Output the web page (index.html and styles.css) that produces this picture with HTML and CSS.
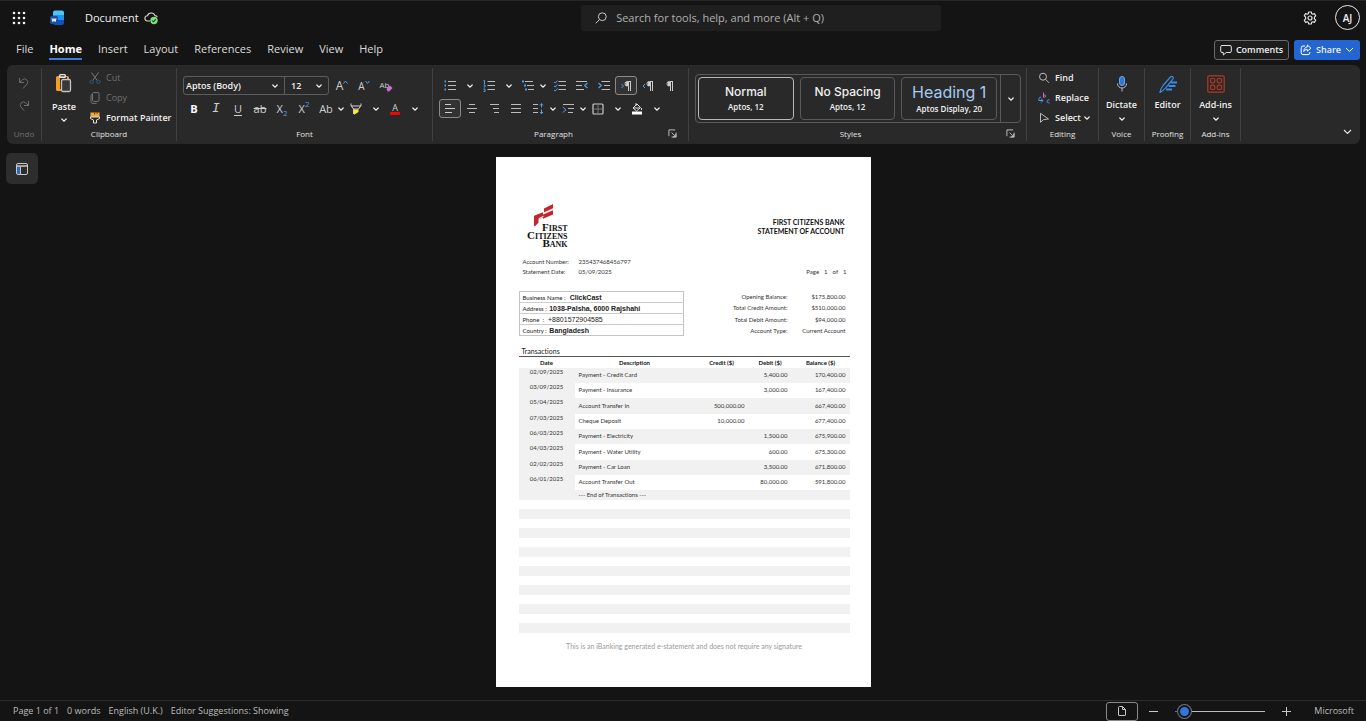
FILE: index.html
```html
<!DOCTYPE html>
<html lang="en">
<head>
<meta charset="utf-8">
<title>Document</title>
<link rel="stylesheet" href="styles.css">
</head>
<body>
<svg class="defs" aria-hidden="true">
  <symbol id="chev" viewBox="0 0 8 8"><path d="M1.800 3 4 5.200 6.200 3" fill="none" stroke="currentColor" stroke-width="1.200" stroke-linecap="round"/></symbol>
  <symbol id="launch" viewBox="0 0 10 10"><path d="M1 8V1h7M4 4l3.600 3.600M9 4v5H4M8.600 5.500v3h-3" fill="none" stroke="currentColor"/></symbol>
</svg>

<header class="titlebar">
  <div class="brand">
    <button class="plain waffle" aria-label="App launcher"><svg width="14" height="14" viewBox="0 0 14 14" fill="#f2f2f2"><circle cx="2" cy="2" r="1.300"/><circle cx="7" cy="2" r="1.300"/><circle cx="12" cy="2" r="1.300"/><circle cx="2" cy="7" r="1.300"/><circle cx="7" cy="7" r="1.300"/><circle cx="12" cy="7" r="1.300"/><circle cx="2" cy="12" r="1.300"/><circle cx="7" cy="12" r="1.300"/><circle cx="12" cy="12" r="1.300"/></svg></button>
    <svg class="word" width="15" height="16" viewBox="0 0 15 16"><path d="M3 5V2.500A2 2 0 0 1 5 .5h7a2 2 0 0 1 2 2V5z" fill="#4fc3fa"/><path d="M3 5h11v5H3z" fill="#2390ee"/><path d="M3 10h11v3a2 2 0 0 1-2 2H5a2 2 0 0 1-2-2z" fill="#154fb8"/><rect y="6" width="8" height="8" rx="1.500" fill="#174ea6"/><path d="m2 8.300.9 3.300L4 8.600l1.100 3L6 8.300" fill="none" stroke="#fff"/></svg>
    <span class="doc-title">Document</span>
    <svg class="cloud" width="15" height="14" viewBox="0 0 15 14"><path d="M6 10H3.600a2.600 2.600 0 0 1-.2-5.200A4 4 0 0 1 11 4.600c1.300.1 2 .8 2.200 1.600" fill="none" stroke="#d8d8d8" stroke-width="1.100"/><circle cx="10" cy="9.500" r="3.700" fill="#7ddc7d"/><path d="m8.300 9.600 1.200 1.200 2.200-2.400" fill="none" stroke="#153d19" stroke-width="1.100"/></svg>
  </div>
  <label class="search">
    <svg width="12" height="12" viewBox="0 0 12 12" fill="none" stroke="#c8c8c8"><circle cx="7.300" cy="4.700" r="3.900"/><path d="M4.500 7.500.7 11.300"/></svg>
    <input type="search" aria-label="Search" placeholder="Search for tools, help, and more (Alt + Q)">
  </label>
  <div class="account">
    <button class="plain" aria-label="Settings"><svg width="14" height="14" viewBox="0 0 14 14" fill="none" stroke="#e4e4e4" stroke-width="1.200" stroke-linejoin="round"><path d="M5.700 1h2.600l.4 1.700 1 .5 1.700-.6 1.300 2.200-1.300 1.300v1.800l1.300 1.300-1.300 2.200-1.700-.6-1 .5-.4 1.700H5.700l-.4-1.700-1-.5-1.700.6L1.300 9.200l1.300-1.300V6.100L1.300 4.800l1.300-2.200 1.700.6 1-.5z"/><circle cx="7" cy="7" r="2"/></svg></button>
    <button class="plain avatar">AJ</button>
  </div>
</header>

<div class="tabbar">
  <nav class="tabs">
    <a href="#">File</a><a href="#" class="active">Home</a><a href="#">Insert</a><a href="#">Layout</a><a href="#">References</a><a href="#">Review</a><a href="#">View</a><a href="#">Help</a>
  </nav>
  <div class="actions">
    <button class="comments"><svg width="12" height="12" viewBox="0 0 12 12" fill="none" stroke="#e4e4e4"><path d="M2 1.500h8A1.300 1.300 0 0 1 11.300 2.800v4.400A1.300 1.300 0 0 1 10 8.500H6.300L3.300 11V8.500H2A1.300 1.300 0 0 1 .7 7.200V2.800A1.300 1.300 0 0 1 2 1.500z"/></svg>Comments</button>
    <button class="share"><svg width="12" height="12" viewBox="0 0 12 12" fill="none" stroke="#fff"><path d="M5 2H3a1.800 1.800 0 0 0-1.800 1.800v5A1.800 1.800 0 0 0 3 10.600h5a1.800 1.800 0 0 0 1.800-1.800V8M7.300 1l3.700 3.200-3.700 3V5.400C5.600 5.400 4.500 6 3.800 7.500 4 4.800 5.200 3.200 7.300 3z"/></svg>Share<svg width="9" height="9" viewBox="0 0 9 9"><path d="M1 3l3.500 3.500L8 3" fill="none" stroke="#fff"/></svg></button>
  </div>
</div>

<section class="ribbon" aria-label="Home ribbon">
  <div class="group undo">
    <div class="stack">
      <button class="plain" disabled aria-label="Undo"><svg width="12" height="12" viewBox="0 0 12 12" fill="none" stroke="#6c6c6c"><path d="M1.500 1v4.500H6M1.700 5.300 4.600 2.600a3.200 3.200 0 0 1 4.800 4L5 11.500"/></svg></button>
      <button class="plain" disabled aria-label="Redo"><svg width="12" height="12" viewBox="0 0 12 12" fill="none" stroke="#6c6c6c"><path d="M10.500 1v4.500H6M10.300 5.300 7.400 2.600a3.200 3.200 0 0 0-4.800 4L6 10.500"/></svg></button>
    </div>
    <div class="caption dim">Undo</div>
  </div>

  <div class="group clipboard">
    <div class="clip-body">
      <button class="plain big"><svg width="18" height="20" viewBox="0 0 18 20"><rect x="1" y="3" width="13" height="15" rx="1.500" fill="#f39c26"/><rect x="5" y="4" width="7" height="12" fill="#292929"/><rect x="4" y="1" width="7" height="4" rx="1.500" fill="#e6e6e6"/><rect x="5.500" y="2" width="4" height="1.500" fill="#555"/><rect x="6.500" y="6.500" width="9" height="12" rx="1.500" fill="#393939" stroke="#c4c4c4" stroke-width="1.300"/></svg><span>Paste</span><svg class="chev"><use href="#chev"/></svg></button>
      <div class="list">
        <button class="plain line" disabled><svg width="12" height="12" viewBox="0 0 12 12" fill="none"><path d="m2.500.5 5.700 8M9.500.5l-5.700 8" stroke="#777"/><circle cx="2.600" cy="9.800" r="1.700" stroke="#31587e"/><circle cx="9.400" cy="9.800" r="1.700" stroke="#31587e"/></svg>Cut</button>
        <button class="plain line" disabled><svg width="12" height="12" viewBox="0 0 12 12" fill="none" stroke="#747474"><rect x="3.500" y=".6" width="6.500" height="8.800" rx="1"/><path d="M3.300 2.300c-.9 0-1.300.4-1.300 1.300v6c0 1.200.6 1.800 1.700 1.800h4"/></svg>Copy</button>
        <button class="plain line"><svg width="12" height="12" viewBox="0 0 12 12"><path d="M1.500.5h9V5h-9z" fill="#f6a936"/><path d="M5 .5h1.200v2H5zM7.500.5h1.200v1.500H7.500z" fill="#7b4d10"/><path d="M1.500 5h9v1.600L7.500 8v3h-3V8l-3-1.400z" fill="none" stroke="#ddd"/></svg>Format Painter</button>
      </div>
    </div>
    <div class="caption">Clipboard</div>
  </div>

  <div class="group font">
    <div class="row">
      <div class="combo">
        <label class="pick name"><select aria-label="Font"><option>Aptos (Body)</option></select><svg class="chev"><use href="#chev"/></svg></label>
        <label class="pick size"><select aria-label="Font size"><option>12</option></select><svg class="chev"><use href="#chev"/></svg></label>
      </div>
      <button class="tool" aria-label="Grow font"><span class="grow">A</span><svg width="5" height="12" viewBox="0 0 5 12"><path d="M.5 3.500 2.500 1l2 2.500" fill="none" stroke="#4f9fe6"/></svg></button>
      <button class="tool" aria-label="Shrink font"><span class="shrink">A</span><svg width="5" height="12" viewBox="0 0 5 12"><path d="M.5 1 2.500 3.500l2-2.500" fill="none" stroke="#4f9fe6"/></svg></button>
      <button class="tool clear" aria-label="Clear formatting"><span>Ab</span><svg width="7" height="7" viewBox="0 0 8 8"><path d="M.5 4.500 4.500.5l3 3-4 4H2z" fill="#d070d8"/></svg></button>
    </div>
    <div class="row">
      <button class="tool bold">B</button><button class="tool italic">I</button><button class="tool under">U</button><button class="tool strike">ab</button>
      <button class="tool">X<sub>2</sub></button><button class="tool">X<sup>2</sup></button>
      <button class="tool">Ab</button><button class="drop tight" aria-label="Case options"><svg class="chev"><use href="#chev"/></svg></button>
      <button class="tool" aria-label="Highlight"><svg width="12" height="12" viewBox="0 0 12 12"><path d="M1 .5v2l2.500 3.500h5L11 2.500v-2M1 3h10M3.500 6v5" fill="none" stroke="#d4d4d4"/><path d="M4 6.500h4.500V9L4 11.800z" fill="#ffee21"/></svg></button><button class="drop" aria-label="Highlight colours"><svg class="chev"><use href="#chev"/></svg></button>
      <button class="tool colour">A</button><button class="drop" aria-label="Font colours"><svg class="chev"><use href="#chev"/></svg></button>
    </div>
    <div class="caption">Font</div>
  </div>

  <div class="group para">
    <div class="row">
      <button class="tool" aria-label="Bullets"><svg width="12" height="12" viewBox="0 0 12 12"><path d="M4 1.500h8M4 5.500h8M4 9.500h8" stroke="#bbb"/><path d="M.5 1.500h1.500M.5 5.500h1.500M.5 9.500h1.500" stroke="#4f9fe6" stroke-width="2"/></svg></button><button class="drop" aria-label="Bullet options"><svg class="chev"><use href="#chev"/></svg></button>
      <button class="tool" aria-label="Numbering"><svg width="12" height="12" viewBox="0 0 12 12"><path d="M4.500 1.500H12M4.500 5.500H12M4.500 9.500H12" stroke="#bbb"/><path d="M.5.500h1V4M.5 5h1.500v2H.8M.5 9h1.500v2.500H.5" fill="none" stroke="#4f9fe6"/></svg></button><button class="drop" aria-label="Number options"><svg class="chev"><use href="#chev"/></svg></button>
      <button class="tool" aria-label="Multilevel list"><svg width="12" height="12" viewBox="0 0 12 12"><path d="M3 1.500h8M5 5.500h7M6 9.500h6" stroke="#bbb"/><path d="M0 1.500h2M2 5.500h2M3 9.500h2" stroke="#4f9fe6" stroke-width="2"/></svg></button><button class="drop tight after" aria-label="Multilevel options"><svg class="chev"><use href="#chev"/></svg></button>
      <button class="tool" aria-label="Checklist"><svg width="12" height="12" viewBox="0 0 12 12" fill="none"><path d="M4.500 1.500H12M4.500 5.500H12M4.500 9.500H12" stroke="#bbb"/><path d="m0 2 1.300 1L3.500.5M0 6l1.300 1 2.200-2.500M0 10l1.300 1 2.200-2.500" stroke="#4f9fe6"/></svg></button>
      <button class="tool" aria-label="Decrease indent"><svg width="12" height="12" viewBox="0 0 12 12" fill="none"><path d="M0 1.500h11M0 5.500h6M0 9.500h8" stroke="#bbb"/><path d="M11.500 3 8.700 5.500l2.800 2.500" stroke="#4f9fe6" stroke-width="1.200"/></svg></button>
      <button class="tool" aria-label="Increase indent"><svg width="12" height="12" viewBox="0 0 12 12" fill="none"><path d="M3.500 1.500H12M6 5.500h6M3.500 9.500H12" stroke="#bbb"/><path d="M.5 3 3.300 5.500.5 8" stroke="#4f9fe6" stroke-width="1.200"/></svg></button>
      <button class="tool on" aria-label="Left to right"><svg width="12" height="12" viewBox="0 0 12 12"><path d="M11 1.500H7.300a2.300 2.300 0 0 0 0 4.600M8.500 1.500V11M10.500 1.500V11" fill="none" stroke="#ccc"/><path d="M6 2h2.500v4H6z" fill="#ccc"/><path d="M1.500 4 3.500 6l-2 2" fill="none" stroke="#4f9fe6"/></svg></button>
      <button class="tool" aria-label="Right to left"><svg width="12" height="12" viewBox="0 0 12 12"><path d="M11 1.500H7.300a2.300 2.300 0 0 0 0 4.600M8.500 1.500V11M10.500 1.500V11" fill="none" stroke="#ccc"/><path d="M6 2h2.500v4H6z" fill="#ccc"/><path d="M3 4 1 6l2 2" fill="none" stroke="#4f9fe6"/></svg></button>
      <button class="tool" aria-label="Show marks"><svg width="12" height="12" viewBox="0 0 12 12"><path d="M9 1.500H5.300a2.300 2.300 0 0 0 0 4.600M6.500 1.500V11M8.500 1.500V11" fill="none" stroke="#ccc"/><path d="M4 2h2.500v4H4z" fill="#ccc"/></svg></button>
    </div>
    <div class="row">
      <button class="tool on" aria-label="Align left"><svg width="12" height="12" viewBox="0 0 12 12" stroke="#ccc"><path d="M1 1.500h6M1 5.500h10M1 9.500h7"/></svg></button>
      <button class="tool" aria-label="Centre"><svg width="12" height="12" viewBox="0 0 12 12" stroke="#bbb"><path d="M3 1.500h6M1 5.500h10M3 9.500h6"/></svg></button>
      <button class="tool" aria-label="Align right"><svg width="12" height="12" viewBox="0 0 12 12" stroke="#bbb"><path d="M2 1.500h9M5 5.500h6M6 9.500h5"/></svg></button>
      <button class="tool" aria-label="Justify"><svg width="12" height="12" viewBox="0 0 12 12" stroke="#bbb"><path d="M1 1.500h10M1 5.500h10M1 9.500h10"/></svg></button>
      <button class="tool" aria-label="Line spacing"><svg width="12" height="12" viewBox="0 0 12 12" fill="none"><path d="M1 1.500h5M1 5.500h5M1 9.500h5" stroke="#bbb"/><path d="M9.500 .5V4.500M9.500 6.500V11M8 2.500l1.500-1.800L11 2.500M8 9l1.500 1.800L11 9" stroke="#4f9fe6"/></svg></button><button class="drop tight" aria-label="Spacing options"><svg class="chev"><use href="#chev"/></svg></button>
      <button class="tool" aria-label="Indents"><svg width="12" height="12" viewBox="0 0 12 12" fill="none"><path d="M1 1.500h11M6 5.500h6M6 9.500h5" stroke="#bbb"/><path d="M.8 4 4 6.800.8 9.500" stroke="#4f9fe6"/></svg></button><button class="drop tight" aria-label="Indent options"><svg class="chev"><use href="#chev"/></svg></button>
      <button class="tool" aria-label="Borders"><svg width="12" height="12" viewBox="0 0 12 12" fill="none"><rect x="1" y="1" width="10" height="10" rx="1" stroke="#ccc" stroke-width="1.200"/><path d="M6 1v10M1 6h10" stroke="#777"/></svg></button><button class="drop" aria-label="Border options"><svg class="chev"><use href="#chev"/></svg></button>
      <button class="tool" aria-label="Shading"><svg width="12" height="12" viewBox="0 0 12 12"><path d="M2 5 6 1l3.500 3.500-4 3.500zM5 0v3M2 5h7M10.500 5v2" fill="none" stroke="#ddd"/><path d="M1 8.500h10V11.500H1z" fill="#fff"/></svg></button><button class="drop" aria-label="Shading options"><svg class="chev"><use href="#chev"/></svg></button>
    </div>
    <div class="caption with-launch">Paragraph<button class="plain launch" aria-label="Paragraph settings"><svg width="9" height="9"><use href="#launch"/></svg></button></div>
  </div>

  <div class="group styles">
    <div class="gallery">
      <button class="style chosen"><b>Normal</b><small>Aptos, 12</small></button>
      <button class="style"><b>No Spacing</b><small>Aptos, 12</small></button>
      <button class="style heading"><b>Heading 1</b><small>Aptos Display, 20</small></button>
      <button class="plain more" aria-label="More styles"><svg class="chev"><use href="#chev"/></svg></button>
    </div>
    <div class="caption with-launch">Styles<button class="plain launch" aria-label="Styles settings"><svg width="9" height="9"><use href="#launch"/></svg></button></div>
  </div>

  <div class="group editing">
    <div class="list">
      <button class="plain line"><svg width="12" height="12" viewBox="0 0 12 12" fill="none" stroke="#bbb"><circle cx="5" cy="4.700" r="3.500"/><path d="m7.500 7.300 3.500 3.500"/></svg>Find</button>
      <button class="plain line"><svg width="12" height="12" viewBox="0 0 12 12" fill="none"><path d="M5.500.5v5M5.500 3.500c3-1.500 3 2.500 0 1.500" stroke="#c76fd0"/><path d="M3 5C1 5 .8 7 .8 8.500h4M3 6.700l2 1.800-2 2M11.500 8c-3-1-3.500 3.500 0 2.800" stroke="#4f9fe6"/></svg>Replace</button>
      <button class="plain line"><svg width="12" height="12" viewBox="0 0 12 12" fill="none" stroke="#bbb"><path d="M2.500 1.300v9L5.500 7.600l5-.6z"/></svg><span>Select</span><svg class="chev"><use href="#chev"/></svg></button>
    </div>
    <div class="caption">Editing</div>
  </div>

  <div class="group feature">
    <button class="plain big"><svg width="18" height="18" viewBox="0 0 18 18" fill="none"><rect x="6.500" y="1.500" width="5" height="9" rx="2.500" fill="#2f77d4" stroke="#62a7ef"/><path d="M4.500 8.500c0 6 9 6 9 0M9 13v3.500" stroke="#bdbdbd"/></svg><span>Dictate</span><svg class="chev"><use href="#chev"/></svg></button>
    <div class="caption">Voice</div>
  </div>
  <div class="group feature">
    <button class="plain big"><svg width="18" height="18" viewBox="0 0 18 18" fill="none" stroke="#3a8be8"><path d="M1 17.500c0-3 1.500-5 3-7L11.500 2c1.500-1.500 3.500 0 2.500 1.800L6.500 13c-1.500 2-3 3-5.500 4.500z" stroke-width="1.200"/><path d="M11.500 7.500H18M9.500 11h7M7 14.500h6" stroke-width="2"/></svg><span>Editor</span></button>
    <div class="caption">Proofing</div>
  </div>
  <div class="group feature wide">
    <button class="plain big"><svg width="18" height="18" viewBox="0 0 18 18" fill="none" stroke="#b23a20" stroke-width="1.200"><rect x=".8" y=".8" width="16.400" height="16.400" rx="1.500"/><rect x="3.500" y="3.500" width="4.300" height="4.300" rx="1.500"/><rect x="10.200" y="3.500" width="4.300" height="4.300" rx="1.500"/><rect x="3.500" y="10.200" width="4.300" height="4.300" rx="1.500"/><rect x="10.200" y="10.200" width="4.300" height="4.300" rx="1.500"/></svg><span>Add-ins</span><svg class="chev"><use href="#chev"/></svg></button>
    <div class="caption">Add-ins</div>
  </div>
  <button class="plain collapse" aria-label="Collapse ribbon"><svg width="9" height="9" viewBox="0 0 9 9"><path d="M1 3l3.500 3.500L8 3" fill="none" stroke="#e0e0e0" stroke-width="1.200"/></svg></button>
</section>

<main class="workspace">
  <button class="navpane" aria-label="Navigation"><svg width="14" height="14" viewBox="0 0 14 14" fill="none"><path d="M2 4h3v8H2z" fill="#2a6cb8"/><rect x="1.500" y="1.500" width="11" height="11" rx="1.500" stroke="#c8c8c8"/><path d="M1.500 4h11" stroke="#c8c8c8" stroke-width="1.500"/><path d="M5.500 4.500v8" stroke="#c8c8c8"/></svg></button>
  <article class="paper">
    <div class="head">
      <div class="logo">
        <svg width="20" height="23" viewBox="0 0 20 23" fill="#c4262e"><path d="M10 5.500 19 1v4.200L12.500 8.300 10 9.500zM0 12.800 9 9.200v2.300L19 7.300v4.300L9 15.800v-1.500L4.500 16.500v3.300L0 24z"/><path d="m4.500 15.800 5-2.500M10 10.500l3-1.800" stroke="#fff"/></svg>
        <div class="logo-text"><span><i>F</i>IRST</span><span><i>C</i>ITIZENS</span><span><i>B</i>ANK</span></div>
      </div>
      <h1>FIRST CITIZENS BANK<br>STATEMENT OF ACCOUNT</h1>
    </div>
    <dl class="meta">
      <dt>Account Number:</dt><dd>235437468456797</dd><dd></dd>
      <dt>Statement Date:</dt><dd>05/09/2025</dd><dd class="pageno"><span>Page</span><span>1</span><span>of</span><span>1</span></dd>
    </dl>
    <div class="details">
      <div class="holder">
        <p>Business Name : &nbsp;<b>ClickCast</b></p>
        <p>Address : <b>1038-Palsha, 6000 Rajshahi</b></p>
        <p>Phone &nbsp;: &nbsp;<em>+8801572904585</em></p>
        <p>Country : <b>Bangladesh</b></p>
      </div>
      <dl class="totals">
        <dt>Opening Balance:</dt><dd>$175,800.00</dd>
        <dt>Total Credit Amount:</dt><dd>$510,000.00</dd>
        <dt>Total Debit Amount:</dt><dd>$94,000.00</dd>
        <dt>Account Type:</dt><dd>Current Account</dd>
      </dl>
    </div>
    <table>
      <caption>Transactions</caption>
      <colgroup><col class="c-date"><col class="c-desc"><col class="c-credit"><col class="c-debit"><col class="c-balance"></colgroup>
      <thead><tr><th>Date</th><th>Description</th><th>Credit ($)</th><th>Debit ($)</th><th>Balance ($)</th></tr></thead>
      <tbody>
        <tr><td>02/09/2025</td><td>Payment - Credit Card</td><td></td><td>5,400.00</td><td>170,400.00</td></tr>
        <tr><td>03/09/2025</td><td>Payment - Insurance</td><td></td><td>3,000.00</td><td>167,400.00</td></tr>
        <tr><td>05/04/2025</td><td>Account Transfer In</td><td>500,000.00</td><td></td><td>667,400.00</td></tr>
        <tr><td>07/03/2025</td><td>Cheque Deposit</td><td>10,000.00</td><td></td><td>677,400.00</td></tr>
        <tr><td>06/03/2025</td><td>Payment - Electricity</td><td></td><td>1,500.00</td><td>675,900.00</td></tr>
        <tr><td>04/03/2025</td><td>Payment - Water Utility</td><td></td><td>600.00</td><td>675,300.00</td></tr>
        <tr><td>02/02/2025</td><td>Payment - Car Loan</td><td></td><td>3,500.00</td><td>671,800.00</td></tr>
        <tr><td>06/01/2025</td><td>Account Transfer Out</td><td></td><td>80,000.00</td><td>591,800.00</td></tr>
        <tr class="end"><td></td><td colspan="4">--- End of Transactions ---</td></tr>
      </tbody>
    </table>
    <div class="stripes"><i></i><i></i><i></i><i></i><i></i><i></i><i></i></div>
    <p class="note">This is an iBanking generated e-statement and does not require any signature</p>
  </article>
</main>

<footer class="status">
  <span>Page 1 of 1</span><span>0 words</span><span>English (U.K.)</span><span>Editor Suggestions: Showing</span>
  <div class="view">
    <button class="plain layout" aria-label="Page view"><svg width="8" height="10" viewBox="0 0 8 10" fill="none" stroke="#c8c8c8"><path d="M1.500.5h3L7.500 3.500V9a.5.5 0 0 1-.5.5H1A.5.5 0 0 1 .5 9V1.500a1 1 0 0 1 1-1zM4.500.5v3h3"/></svg></button>
    <button class="plain zoom" aria-label="Zoom out"><svg width="9" height="9"><path d="M0 4.500h9" stroke="#c8c8c8"/></svg></button>
    <input type="range" aria-label="Zoom" min="0" max="100" value="3">
    <button class="plain zoom" aria-label="Zoom in"><svg width="9" height="9"><path d="M0 4.500h9M4.500 0v9" stroke="#c8c8c8"/></svg></button>
    <span>Microsoft</span>
  </div>
</footer>
</body>
</html>
```

FILE: styles.css
```css
* { box-sizing: border-box; }
body {
  margin: 0;
  min-height: 100vh;
  display: flex;
  flex-direction: column;
  background: #141414;
  border-top: 1px solid #262626;
  color: #f0f0f0;
  font: 11px/14px "Open Sans", "Noto Sans", sans-serif;
}
button, input, select { font: inherit; color: inherit; }
button { padding: 0; border: 0; background: none; display: flex; align-items: center; justify-content: center; }
svg { flex: none; display: block; }
p, dl, dd, h1 { margin: 0; }
.defs { position: absolute; width: 0; height: 0; }
.chev { width: 8px; height: 8px; }

.titlebar {
  display: grid;
  grid-template-columns: 19fr 12fr 14fr;
  align-items: center;
  height: 33px;
  padding: 0 6px 0 12px;
}
.brand { display: flex; align-items: center; }
.word { margin-left: 24px; }
.doc-title { margin: 0 5px 0 20px; }
.search {
  display: flex;
  align-items: center;
  gap: 9px;
  height: 26px;
  padding: 0 14px;
  background: #1f1f1f;
  border-radius: 3px;
}
.search input { flex: 1; min-width: 0; border: 0; padding: 0; background: none; outline: 0; font-size: 11px; }
.search input::placeholder { color: #b0b0b0; opacity: 1; }
.account { display: flex; justify-content: flex-end; align-items: center; gap: 18px; }
.avatar { width: 25px; height: 25px; border: 1px solid #e8e8e8; border-radius: 50%; font-size: 10px; font-weight: 600; }

.tabbar { display: flex; justify-content: space-between; align-items: center; height: 31px; padding: 0 6px 0 16px; }
.tabs { display: flex; gap: 16px; }
.tabs a { color: #dcdcdc; text-decoration: none; font-size: 11px; line-height: 19px; border-bottom: 2px solid transparent; }
.tabs .active { color: #fff; font-weight: 700; border-color: #3b7fdc; }
.actions { display: flex; gap: 5px; }
.comments, .share { height: 20px; gap: 4px; font-size: 9px; font-weight: 600; border-radius: 3px; }
.comments { width: 75px; border: 1px solid #6a6a6a; background: #1d1d1d; }
.share { width: 66px; background: #2366d1; }

.ribbon {
  display: flex;
  align-items: stretch;
  margin: 0 6px 0 7px;
  padding: 3px 0;
  background: #292929;
  border-radius: 6px;
}
.group { display: flex; flex-direction: column; height: 73px; padding-bottom: 1px; border-right: 1px solid #404040; }
.caption { margin-top: auto; text-align: center; font-size: 8px; line-height: 13px; color: #e2e2e2; }
.dim { color: #707070; }
.with-launch { display: grid; grid-template-columns: 1fr 20px; align-items: center; }
.launch { justify-content: flex-start; color: #c8c8c8; }
.stack { display: grid; gap: 11px; justify-content: center; padding-top: 9px; }
.undo { width: 35px; }
.clipboard { width: 135px; }
.clip-body { display: flex; }
.big { flex-direction: column; justify-content: flex-start; width: 100%; font-size: 9px; font-weight: 600; line-height: 14px; padding-top: 7px; gap: 5px; }
.big .chev { margin-top: -2px; }
.clip-body .big { width: 44px; padding-top: 5px; gap: 7px; }
.clip-body .chev { margin-top: -5px; }
.list { display: grid; gap: 6px; padding: 3px 0 0 3px; }
.line { justify-content: flex-start; gap: 5px; font-size: 9px; font-weight: 600; line-height: 14px; white-space: nowrap; }
.line .chev { margin-left: -3px; }
.line:disabled { color: #707070; font-weight: 400; }

.font, .para { width: 256px; padding-left: 6px; }
.font .caption { padding-right: 6px; }
.row { display: flex; height: 19px; margin-top: 4px; }
.row:first-child { margin-top: 8px; }
.combo { display: flex; width: 146px; margin-right: 2px; border: 1px solid #5c5c5c; border-radius: 3px; }
.pick { display: grid; align-items: center; }
.pick > * { grid-area: 1 / 1; }
.pick select { width: 100%; height: 17px; padding: 0 2px; appearance: none; border: 0; background: none; font-size: 9px; font-weight: 600; outline: 0; }
.pick .chev { justify-self: end; margin-right: 5px; pointer-events: none; }
.name { flex: 1; border-right: 1px solid #5c5c5c; }
.size { width: 43px; }
.size select { padding-left: 6px; }
.tool { width: 22px; height: 19px; flex: none; font-size: 11px; line-height: 14px; color: #d0d0d0; }
.drop { width: 17px; flex: none; }
.tight { width: 8px; }
.after { margin-right: 2px; }
.on { border: 1px solid #8a8a8a; border-radius: 3px; background: #333; }
.grow { font-size: 12px; }
.shrink { font-size: 10px; }
.clear { display: grid; grid-template: 12px / 13px; align-content: center; justify-content: center; font-size: 8px; line-height: 9px; }
.clear > * { grid-area: 1 / 1; }
.clear span { align-self: start; justify-self: start; }
.clear svg { align-self: end; justify-self: end; }
.bold { font-weight: 700; color: #fff; }
.italic { font-family: "Liberation Mono", monospace; font-style: italic; font-size: 13px; }
.under { text-decoration: underline; text-underline-offset: 2px; }
.strike { text-decoration: line-through; }
.tool sub, .tool sup { font-size: 8px; line-height: 10px; color: #4f9fe6; }
.tool sub { align-self: flex-end; }
.tool sup { align-self: flex-start; }
.colour { flex-direction: column; font-size: 9px; line-height: 9px; }
.colour::after { content: ""; width: 10px; height: 3px; background: #f00; border-radius: 1px; }

.styles { width: 338px; padding-left: 6px; }
.gallery { display: flex; gap: 6px; width: 326px; margin-top: 6px; padding: 2px 0 2px 2px; border: 1px solid #5a5a5a; border-radius: 4px; }
.style { flex: 1; flex-direction: column; height: 43px; border: 1px solid #5a5a5a; border-radius: 4px; font-family: Inter, sans-serif; }
.style b { font-size: 12px; line-height: 16px; font-weight: 500; }
.style small { font: 600 8px/14px "Open Sans", sans-serif; }
.chosen { border-color: #b8b8b8; }
.heading b { font-size: 16px; line-height: 20px; font-weight: 400; color: #a5cbef; }
.more { width: 20px; margin: -2px 0 -2px -3px; border-left: 1px solid #5a5a5a; }

.editing { width: 72px; }
.editing .list { padding-left: 11px; }
.feature { width: 46px; }
.wide { width: 50px; }
.collapse { align-self: flex-end; margin-left: auto; padding: 5px 8px; }

.workspace { flex: 1; display: grid; grid-template-columns: 1fr minmax(0, 375px) 1fr; align-items: start; padding: 13px 0; }
.navpane { width: 32px; height: 31px; margin: -4px 0 0 6px; background: #2d2d2d; border-radius: 5px; }
.paper {
  min-height: 530px;
  padding: 46px 21px 0 23px;
  background: #fff;
  color: #333;
  font: 6px/10px Lato, sans-serif;
  font-variant-ligatures: none;
}
.head { display: flex; justify-content: space-between; padding: 0 5px 0 7px; }
.logo { display: grid; width: 42px; }
.logo svg { margin-left: 8px; }
.logo-text { display: grid; grid-auto-rows: 8px; justify-items: end; margin-top: -3px; font: 700 8px/8px "Liberation Serif", serif; color: #111; }
.logo-text i { font-style: normal; font-size: 11px; }
.head h1 { padding-top: 15px; text-align: right; font-size: 7px; line-height: 9px; font-weight: 700; color: #111; }
.meta { display: grid; grid-template-columns: 56px 1fr auto; padding: 10px 3px 0 4px; }
.pageno { display: flex; gap: 5px; }
.details { display: flex; justify-content: space-between; margin-top: 14px; }
.holder { width: 50%; border: 1px solid #c4c4c4; }
.holder p { padding-left: 3px; line-height: 11px; height: 11px; border-bottom: 1px solid #ccc; color: #222; }
.holder p:last-child { border: 0; height: 10px; }
.holder b, .holder em { margin-left: 1px; font: 700 7px/10px "Liberation Sans", sans-serif; }
.holder em { font-weight: 400; }
.totals { display: grid; grid-template-columns: auto 58px; line-height: 11px; text-align: right; padding-right: 4px; }

table { width: 100%; margin-top: 10px; table-layout: fixed; border-collapse: collapse; }
caption { padding-left: 3px; text-align: left; font-size: 7px; line-height: 10px; color: #222; }
.c-date { width: 56px; }
.c-credit { width: 54px; }
.c-debit { width: 43px; }
.c-balance { width: 58px; }
th { padding: 0; height: 11px; line-height: 9px; border-top: 1px solid #555; font-weight: 700; color: #111; }
td { padding: 0 4px; height: 15px; text-align: right; }
tbody tr:nth-child(3n) td { height: 16px; }
tbody tr:nth-child(odd) td, tbody td:first-child { background: #f1f1f1; }
td:first-child { padding: 0; vertical-align: top; text-align: center; line-height: 8px; }
td:nth-child(2) { text-align: left; }
tbody tr.end:nth-child(n) td { height: 10px; line-height: 9px; }
.stripes { display: grid; gap: 9px; padding-top: 9px; }
.stripes i { height: 10px; background: #f1f1f1; }
.note { margin-top: 8px; text-align: center; font-size: 7px; color: #999; }

.status {
  display: flex;
  align-items: center;
  gap: 8px;
  height: 21px;
  padding: 0 12px 0 13px;
  border-top: 1px solid #2c2c2c;
  font-size: 9px;
  color: #bdbdbd;
}
.view { display: flex; align-items: center; gap: 11px; margin-left: auto; }
.layout { width: 32px; height: 19px; border: 1px solid #8a8a8a; border-radius: 3px; }
.view input { width: 90px; height: 14px; margin: 0 6px; appearance: none; background: linear-gradient(90deg, #2f77dc 4px, #bbb 4px) center / 100% 1px no-repeat; }
.view input::-webkit-slider-thumb { appearance: none; width: 13px; height: 13px; border-radius: 50%; background: #2f77dc; border: 2px solid #141414; box-shadow: 0 0 0 1px #777; }
.view span { margin-left: 12px; }
```
